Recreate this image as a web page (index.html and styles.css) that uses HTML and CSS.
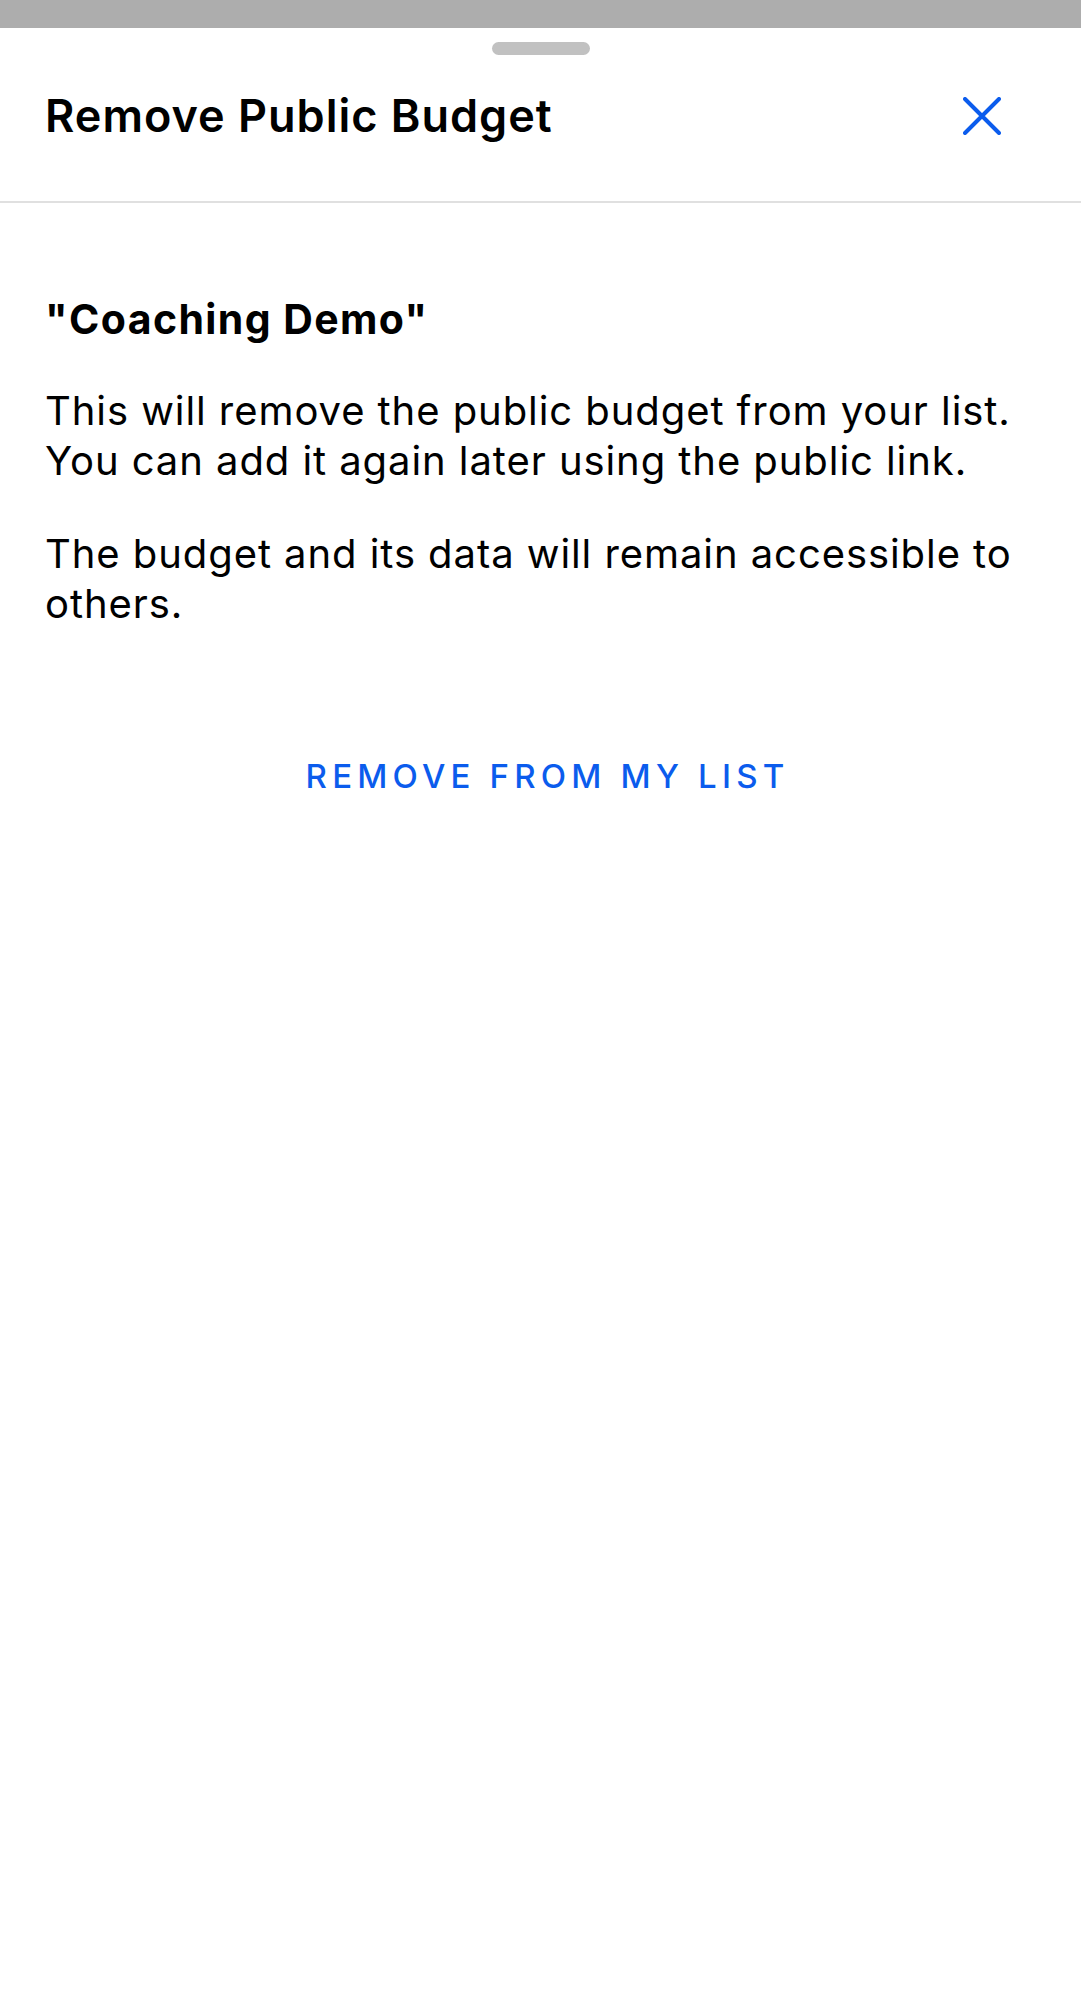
FILE: index.html
```html
<!DOCTYPE html>
<html lang="en">
  <head>
    <meta charset="UTF-8" />
    <meta name="viewport" content="width=device-width, initial-scale=1.0" />
    <title>Remove Public Budget</title>
    <link rel="stylesheet" href="styles.css">
  </head>
  <body>
    <div class="backdrop"></div>

    <div class="sheet">
      <div class="grabber"></div>

      <header class="sheet-header">
        <h1 class="sheet-title">Remove Public Budget</h1>
        <button class="close" aria-label="Close">
          <svg width="38" height="38" viewBox="0 0 38 38">
            <path d="M2 2 L36 36 M36 2 L2 36" />
          </svg>
        </button>
      </header>

      <main class="sheet-body">
        <h2 class="budget-name">"Coaching Demo"</h2>
        <p>
          This will remove the public budget from your list.<br />
          You can add it again later using the public link.
        </p>
        <p>The budget and its data will remain accessible to others.</p>

        <div class="actions">
          <button class="text-button">Remove from my list</button>
        </div>
      </main>
    </div>
  </body>
</html>
```

FILE: styles.css
```css
body {
  background: white;
  color: #000;
  font-family: Inter, "Liberation Sans", sans-serif;
  margin: 0;
}

.backdrop {
  background: #adadad;
  height: 28px;
}

.sheet {
  background: white;
}

.grabber {
  background: #c1c1c1;
  border-radius: 7px;
  height: 13px;
  margin: 14px auto 0;
  width: 98px;
}

.sheet-header {
  align-items: center;
  border-bottom: 2px solid #e0e0e0;
  display: flex;
  justify-content: space-between;
  padding: 37px 80px 61px 45px;
}

.sheet-title {
  font-size: 45px;
  font-weight: 600;
  letter-spacing: 1px;
  line-height: 48px;
  margin: 0;
}

.close {
  background: none;
  border: 0;
  display: flex;
  padding: 0;
}

.close path {
  fill: none;
  stroke: #0b5ced;
  stroke-linecap: round;
  stroke-width: 4;
}

.sheet-body {
  padding: 92px 45px 0;
}

.budget-name {
  font-size: 41px;
  font-weight: 700;
  letter-spacing: 1.4px;
  line-height: 48px;
  margin: 0 0 43px;
}

.sheet-body p {
  font-size: 40px;
  letter-spacing: 0.93px;
  line-height: 50px;
  margin: 0 0 43px;
}

.actions {
  display: flex;
  justify-content: center;
  padding-top: 84px;
}

.text-button {
  background: none;
  border: 0;
  color: #0b5ced;
  font-family: inherit;
  font-size: 33px;
  font-weight: 500;
  letter-spacing: 5.2px;
  line-height: 40px;
  padding: 0 0 0 14px;
  text-transform: uppercase;
}
```
